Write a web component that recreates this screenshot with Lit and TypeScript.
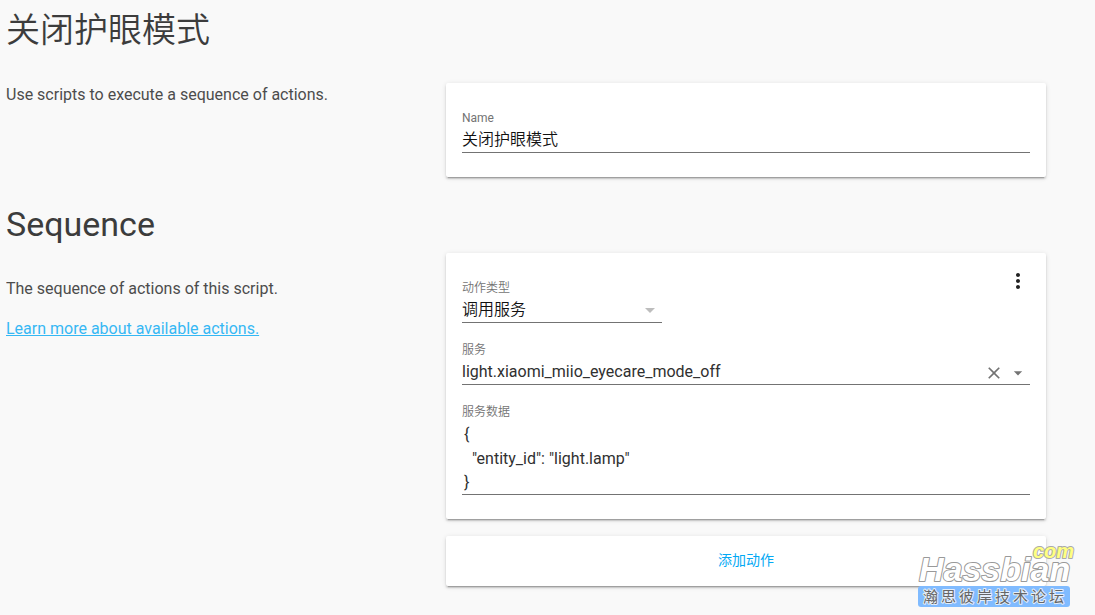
import { LitElement, html, css } from "lit";
import { customElement, property, state } from "lit/decorators.js";

@customElement("config-section")
class ConfigSection extends LitElement {
  static styles = css`
    :host {
      display: flex;
      gap: 40px;
    }
    .intro {
      flex: 0 1 400px;
      min-width: 0;
      color: #212121;
    }
    .title {
      margin: 0;
      padding-bottom: 33px;
      font-size: 34px;
      line-height: 40px;
      font-weight: 400;
      opacity: 0.87;
    }
    .title:lang(zh) {
      font-weight: 350;
    }
    .text {
      font-size: 16px;
      line-height: 24px;
      opacity: 0.8;
    }
    .panel {
      flex: 1 1 600px;
      max-width: 600px;
      min-width: 0;
      display: flex;
      flex-direction: column;
      gap: 17px;
      padding-top: 49px;
    }
    :host([offset]) .panel {
      padding-top: 73px;
    }
    @media (max-width: 760px) {
      :host {
        flex-direction: column;
        gap: 16px;
      }
      .intro,
      .panel {
        flex: none;
      }
      .panel,
      :host([offset]) .panel {
        padding-top: 0;
      }
    }
  `;
  @property() heading = "";
  @property() locale = "en";
  render() {
    return html`
      <div class="intro">
        <h1 class="title" lang=${this.locale}>${this.heading}</h1>
        <div class="text"><slot name="intro"></slot></div>
      </div>
      <div class="panel"><slot></slot></div>
    `;
  }
}

@customElement("app-root")
class AppRoot extends LitElement {
  static styles = css`
    :host {
      display: block;
      position: relative;
      box-sizing: border-box;
      min-height: 100vh;
      padding: 10px 6px 28px;
      background: #f9f9f9;
      color: #212121;
      font-family: Roboto, "Noto Sans CJK SC", sans-serif;
    }
    .page {
      display: flex;
      flex-direction: column;
      gap: 27px;
      max-width: 1040px;
    }
    .intro {
      margin: 0 0 16px;
    }
    .link {
      color: #03a9f4;
    }
    .card {
      display: flex;
      flex-direction: column;
      gap: 16px;
      padding: 24px 16px;
      background: #fff;
      border-radius: 2px;
      box-shadow: 0 2px 2px 0 rgba(0, 0, 0, 0.14),
        0 1px 5px 0 rgba(0, 0, 0, 0.12), 0 3px 1px -2px rgba(0, 0, 0, 0.2);
    }
    .row {
      display: flex;
      justify-content: space-between;
      align-items: flex-start;
    }
    .field {
      display: flex;
      flex-direction: column;
    }
    .narrow {
      width: 200px;
    }
    .label {
      padding-top: 1px;
      font-size: 12px;
      line-height: 20px;
      color: #737373;
    }
    .label:lang(zh) {
      font-weight: 350;
    }
    .control {
      display: flex;
      align-items: center;
      border-bottom: 1px solid #737373;
    }
    .input {
      box-sizing: border-box;
      flex: 1;
      min-width: 0;
      height: 24px;
      margin: 0;
      padding: 0;
      border: 0;
      outline: 0;
      background: none;
      color: #303030;
      font-family: inherit;
      font-size: 16px;
      line-height: 24px;
      appearance: none;
      resize: none;
    }
    .input:lang(zh) {
      font-weight: 350;
      color: #111;
    }
    .area {
      height: 72px;
      padding: 1px 2px 0;
      overflow: hidden;
    }
    .icon-button {
      display: flex;
      margin: 0;
      padding: 0;
      border: 0;
      background: none;
      color: #737373;
      cursor: pointer;
    }
    .small {
      padding: 2px 2px 0;
    }
    .menu {
      margin-top: -8px;
      color: #212121;
    }
    .icon {
      display: block;
      width: 24px;
      height: 24px;
      fill: currentColor;
    }
    .small .icon {
      width: 20px;
      height: 20px;
    }
    .select-box {
      display: grid;
    }
    .select-box > * {
      grid-area: 1 / 1;
    }
    .arrow {
      justify-self: end;
      color: #bdbdbd;
      pointer-events: none;
    }
    .add {
      height: 50px;
      padding: 0 0 2px;
      border: 0;
      border-radius: 2px;
      background: #fff;
      box-shadow: 0 2px 2px 0 rgba(0, 0, 0, 0.14),
        0 1px 5px 0 rgba(0, 0, 0, 0.12), 0 3px 1px -2px rgba(0, 0, 0, 0.2);
      color: #03a9f4;
      font: 400 14px/20px Roboto, "Noto Sans CJK SC", sans-serif;
      cursor: pointer;
    }
    .mark {
      position: absolute;
      right: 20px;
      bottom: 6px;
      width: 158px;
      height: 68px;
      pointer-events: none;
    }
    .mark-text {
      font-family: "Liberation Sans", Arial, sans-serif;
      font-style: italic;
      font-weight: 700;
      paint-order: stroke;
      stroke-linejoin: round;
      stroke-width: 2px;
    }
    .mark-cjk {
      font-family: "Noto Sans CJK SC", sans-serif;
      paint-order: stroke;
      stroke-linejoin: round;
      stroke-width: 2px;
    }
  `;

  @state() name = "关闭护眼模式";
  @state() service = "light.xiaomi_miio_eyecare_mode_off";

  render() {
    return html`
      <main class="page">
        <config-section offset locale="zh" heading=${this.name}>
          <div slot="intro">Use scripts to execute a sequence of actions.</div>
          <div class="card">
            <div class="field">
              <label class="label" for="name">Name</label>
              <div class="control">
                <input class="input" id="name" lang="zh" .value=${this.name}
                  @input=${(e: Event) => (this.name = (e.target as HTMLInputElement).value)} />
              </div>
            </div>
          </div>
        </config-section>

        <config-section heading="Sequence">
          <div slot="intro">
            <p class="intro">The sequence of actions of this script.</p>
            <a class="link" href="#actions">Learn more about available actions.</a>
          </div>
          <div class="card">
            <div class="row">
              <div class="field narrow">
                <label class="label" lang="zh" for="type">动作类型</label>
                <div class="control select-box">
                  <select class="input" lang="zh" id="type"><option>调用服务</option></select>
                  <svg class="icon arrow" viewBox="0 0 24 24"><path d="M7 10l5 5 5-5z" /></svg>
                </div>
              </div>
              <button class="icon-button menu" aria-label="Menu">
                <svg class="icon" viewBox="0 0 24 24">
                  <path d="M12 8c1.1 0 2-.9 2-2s-.9-2-2-2-2 .9-2 2 .9 2 2 2zm0 2c-1.1 0-2 .9-2 2s.9 2 2 2 2-.9 2-2-.9-2-2-2zm0 6c-1.1 0-2 .9-2 2s.9 2 2 2 2-.9 2-2-.9-2-2-2z" />
                </svg>
              </button>
            </div>
            <div class="field">
              <label class="label" lang="zh" for="service">服务</label>
              <div class="control">
                <input class="input" id="service" .value=${this.service}
                  @input=${(e: Event) => (this.service = (e.target as HTMLInputElement).value)} />
                <button class="icon-button small" aria-label="Clear" @click=${() => (this.service = "")}>
                  <svg class="icon" viewBox="0 0 24 24">
                    <path d="M19 6.41L17.59 5 12 10.59 6.41 5 5 6.41 10.59 12 5 17.59 6.41 19 12 13.41 17.59 19 19 17.59 13.41 12z" />
                  </svg>
                </button>
                <button class="icon-button small" aria-label="Open list">
                  <svg class="icon" viewBox="0 0 24 24"><path d="M7 10l5 5 5-5z" /></svg>
                </button>
              </div>
            </div>
            <div class="field">
              <label class="label" lang="zh" for="data">服务数据</label>
              <div class="control">
                <textarea class="input area" id="data" spellcheck="false"
                  .value=${'{\n  "entity_id": "light.lamp"\n}'}></textarea>
              </div>
            </div>
          </div>
          <button class="add">添加动作</button>
        </config-section>
      </main>
      <svg class="mark" viewBox="0 0 158 68">
        <rect x="1" y="45" width="152" height="21" rx="3" fill="#80bbff" />
        <text class="mark-text" x="2" y="40" font-size="34" fill="#fff" stroke="#999">Hassbian</text>
        <text class="mark-text" x="116" y="17" font-size="20" fill="#ffff80" stroke="#aaa">com</text>
        <text class="mark-cjk" x="6 24 42 60 78 96 114 132" y="61" font-size="15" fill="#666" stroke="#e4eefa">瀚思彼岸技术论坛</text>
      </svg>
    `;
  }
}
